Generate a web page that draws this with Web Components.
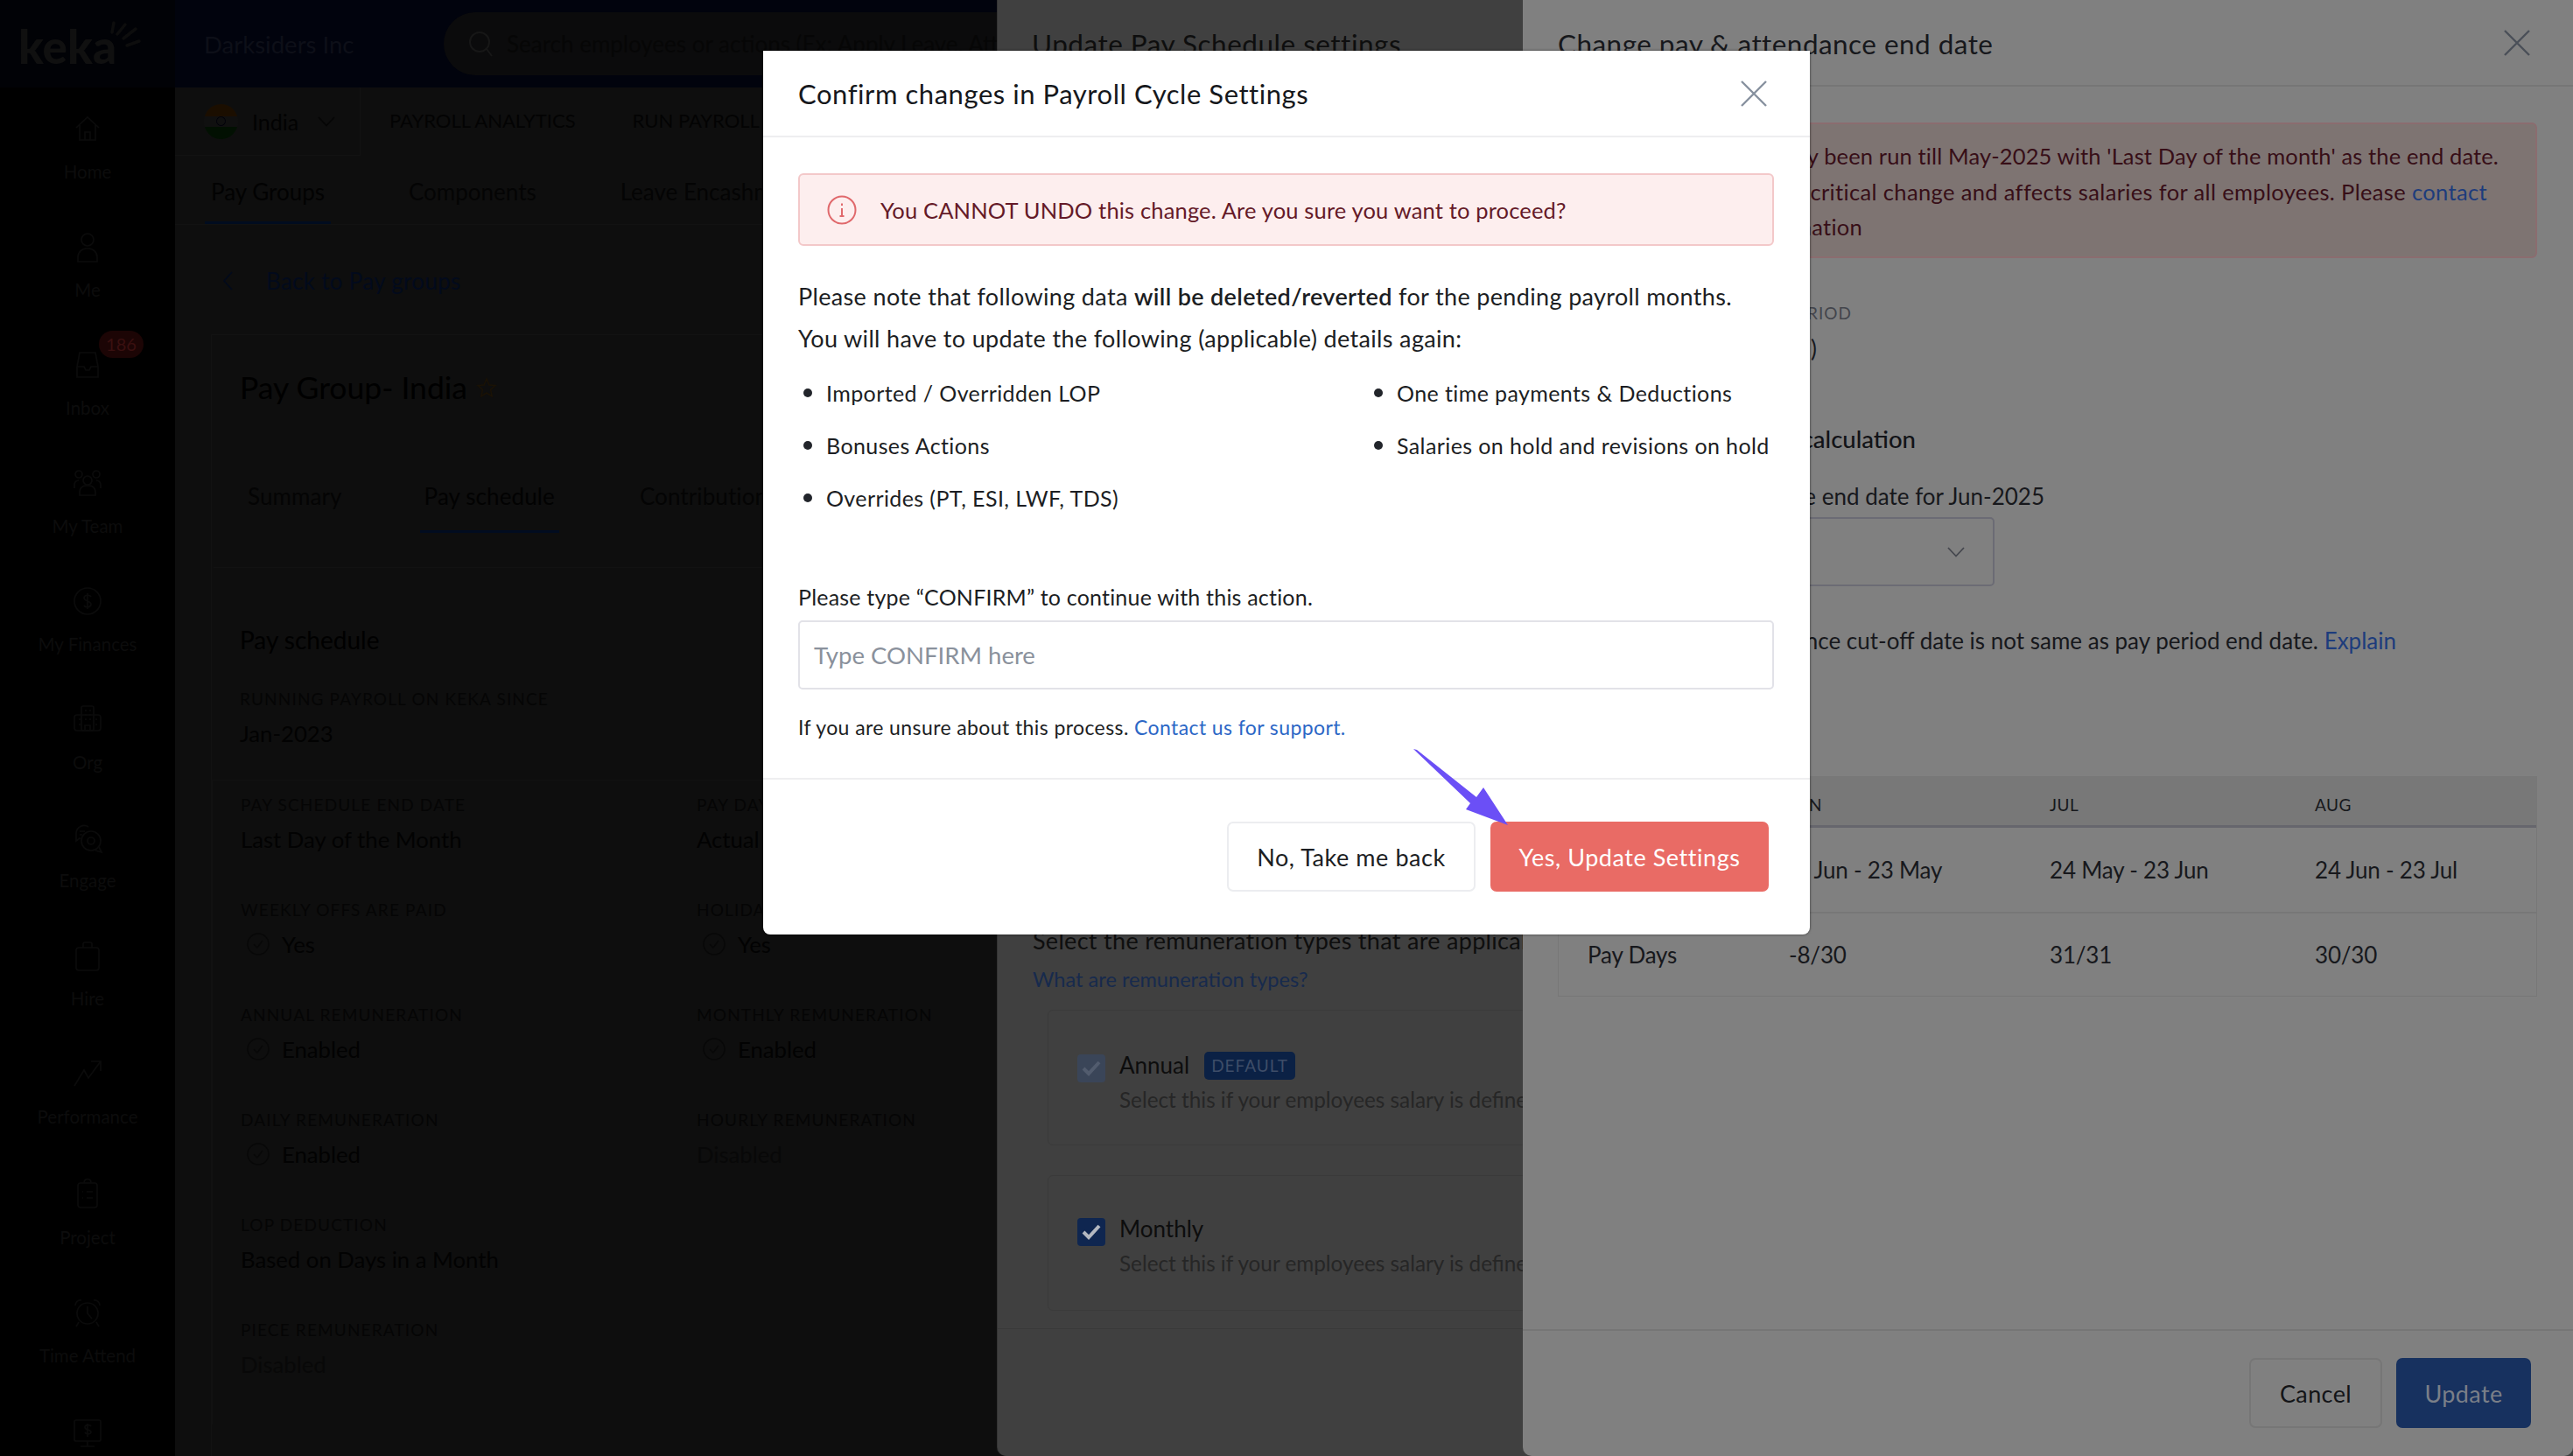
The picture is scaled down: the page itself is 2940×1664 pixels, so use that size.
<!DOCTYPE html>
<html lang="en"><head><meta charset="utf-8"><title>Confirm changes</title>
<style>html,body{margin:0;padding:0;background:#000;height:1664px;overflow:hidden}body{font-family:Lato,"Liberation Sans",sans-serif}</style></head>
<body>
<app-shell>
  <side-nav></side-nav>
  <page-view></page-view>
  <schedule-panel></schedule-panel>
  <end-date-panel></end-date-panel>
  <confirm-modal></confirm-modal>
</app-shell>
<script>
const ICONS={
home:'<path d="M3 15 16 3l13 12M7 12v17h18V12M13 29v-9h6v9"/>',
me:'<circle cx="16" cy="8" r="7"/><path d="M5 33v-5a10 10 0 0 1 10-10h2a10 10 0 0 1 10 10v5z"/>',
inbox:'<path d="M7 2h18l3 16v12H4V18zM4 18h8l2 4h4l2-4h8"/>',
team:'<circle cx="16" cy="13" r="5"/><circle cx="6" cy="6" r="4"/><circle cx="26" cy="6" r="4"/><path d="M7 30v-4a7 7 0 0 1 7-7h4a7 7 0 0 1 7 7v4zM1 22v-4a5 5 0 0 1 5-5M31 22v-4a5 5 0 0 0-5-5"/>',
finance:'<circle cx="16" cy="16" r="15"/><path d="M20 11c-1-2-7-3-8 1 0 5 8 3 8 8-1 4-7 3-8 1M16 7v18"/>',
org:'<rect x="9" y="1" width="14" height="28" rx="2"/><rect x="1" y="11" width="30" height="18" rx="3"/><path d="M13 6h2M18 6h2M13 11h2M18 11h2M6 16h2M13 16h2M18 16h2M25 16h2M6 22h2M25 22h2M13 29v-6h6v6"/>',
engage:'<path d="M17 4a9 9 0 0 0-14 7v9l4-3h1"/><path d="M7 9h6M7 13h3"/><circle cx="20" cy="20" r="11"/><path d="M29 27l3 6-7-2"/><circle cx="20" cy="20" r="4"/>',
hire:'<rect x="3" y="7" width="26" height="26" rx="3"/><path d="M11 7V3a2 2 0 0 1 2-2h6a2 2 0 0 1 2 2v4"/>',
perf:'<path d="M1 30 12 12l5 9L31 2M20 2h11v11"/>',
project:'<rect x="5" y="6" width="22" height="28" rx="3"/><path d="M12 6c0-6 8-6 8 0M10 16h1M15 16h7M10 23h1M15 23h7"/>',
time:'<circle cx="16" cy="17" r="12"/><path d="M16 9v8l5 6M2 8a6 6 0 0 1 7-6M30 8a6 6 0 0 0-7-6M6 27l-3 5M26 27l3 5"/>',
payroll:'<rect x="1" y="1" width="30" height="24" rx="2"/><path d="M20 8c-1-2-7-2-7 1 0 4 7 2 7 6-1 3-6 2-7 0M16 5v15M16 25v5M8 31h16"/>'
};
function el(name,render){customElements.define(name,class extends HTMLElement{
  connectedCallback(){if(this.shadowRoot)return;const a=n=>this.getAttribute(n)||'';this.attachShadow({mode:'open'}).innerHTML=render(a)}
})}
const closeIcon=c=>`<svg width="30" height="30" viewBox="0 0 30 30" fill="none" stroke="${c}" stroke-width="2.4"><path d="M1 1l28 28M29 1L1 29"/></svg>`;
const chev=(c,s=22)=>`<svg width="${s}" height="${s*.6}" viewBox="0 0 20 12" fill="none" stroke="${c}" stroke-width="1.8"><path d="M1 1l9 9.5L19 1"/></svg>`;

el('app-shell',()=>`<style>:host{display:grid;grid-template-columns:200px 1fr;width:2940px;height:1664px;position:relative;overflow:hidden;background:#0e0e0e}</style><slot></slot>`);

el('nav-item',a=>`<style>:host{display:flex;flex-direction:column;align-items:center;height:${a('h')||'135'}px;position:relative;color:#0c0c0c;font-size:20.5px}
svg{width:32px;height:36px;margin-top:18px;overflow:visible}span{position:absolute;top:${a('ly')||'72'}px;line-height:24px;white-space:nowrap}
b{position:absolute;left:113px;top:-4px;width:51px;height:31px;border-radius:16px;background:#1c0505;color:#3a1010;font:400 20px/31px Lato,sans-serif;text-align:center}</style>
<svg viewBox="0 0 32 34" fill="none" stroke="#0b0b0b" stroke-width="1.7">${ICONS[a('icon')]}</svg>${a('label')?`<span>${a('label')}</span>`:''}${a('badge')?`<b>${a('badge')}</b>`:''}`);

el('side-nav',()=>`<style>:host{display:block;background:#000;height:1664px;overflow:hidden}
.logo{height:100px;background:#010206;box-sizing:border-box;position:relative}
.logo span{position:absolute;left:21px;top:17px;font:900 53px/72px Lato,sans-serif;color:#101010}
.logo svg{position:absolute;left:120px;top:20px}
.items{padding-top:12px}</style>
<div class="logo"><span>keka</span><svg width="42" height="36" viewBox="0 0 42 36" fill="none" stroke="#0d0d0d" stroke-linecap="round" stroke-width="3.5"><path d="M8 17 10 6M14 19l9-11M21 24l14-11M25 32l14-5"/></svg></div>
<div class="items">
<nav-item icon="home" label="Home"></nav-item><nav-item icon="me" label="Me"></nav-item><nav-item icon="inbox" label="Inbox" badge="186"></nav-item>
<nav-item icon="team" label="My Team"></nav-item><nav-item icon="finance" label="My Finances"></nav-item><nav-item icon="org" label="Org"></nav-item>
<nav-item icon="engage" label="Engage"></nav-item><nav-item icon="hire" label="Hire"></nav-item><nav-item icon="perf" label="Performance"></nav-item>
<nav-item icon="project" label="Project" h="138" ly="75"></nav-item><nav-item icon="time" label="Time Attend" h="138"></nav-item><nav-item icon="payroll"></nav-item>
</div>`);

el('top-bar',()=>`<style>:host{display:flex;align-items:center;height:100px;background:#01030d;padding-left:33px;box-sizing:border-box;color:#0d0f18;font-size:27.5px}
.name{width:274px;white-space:nowrap}.search{display:flex;align-items:center;height:72px;width:1200px;border-radius:36px;background:#0b0b0c;padding-left:28px;box-sizing:border-box;color:#060606;font-size:26px;white-space:nowrap;gap:16px}</style>
<div class="name">Darksiders Inc</div><div class="search"><svg width="28" height="30" viewBox="0 0 28 30" fill="none" stroke="#171717" stroke-width="2"><circle cx="13" cy="13" r="11"/><path d="M21 21l6 8"/></svg>Search employees or actions (Ex: Apply Leave, Attendance)</div>`);

el('field-item',a=>`<style>:host{display:block;height:120px;box-sizing:border-box;white-space:nowrap}
.l{font-size:19px;line-height:24px;letter-spacing:1.15px;color:#050505;text-transform:uppercase;height:24px}
.v{margin-top:9px;font-size:25.7px;line-height:36px;color:${a('off')?'#080808':'#020202'};display:flex;align-items:center;gap:14px}
svg{margin-left:7px}</style><div class="l">${a('label')}</div><div class="v">${a('check')?`<svg width="26" height="26" viewBox="0 0 26 26" fill="none" stroke="#080808" stroke-width="1.5"><circle cx="13" cy="13" r="12"/><path d="M8 13l4 4 6-8"/></svg>`:''}${a('value')}</div>`);

el('page-view',()=>`<style>:host{display:block;min-width:0;height:1664px;background:#0e0e0e;overflow:hidden;color:#020202}
.bar{display:flex;height:78px;align-items:center;font-size:25px;white-space:nowrap}
.cty{display:flex;align-items:center;width:212px;height:78px;box-sizing:border-box;border-right:1px solid #121212;border-bottom:1px solid #121212;padding-left:33px}
.flag{width:39px;height:40px;border-radius:50%;background:linear-gradient(#1b0e00 0 34%,#101010 34% 66%,#021002 66%);margin-right:16px;display:flex;align-items:center;justify-content:center}
.flag i{width:9px;height:9px;border:1.5px solid #01010a;border-radius:50%}
.cty svg{margin-left:22px}.top{padding:0 0 4px 33px;display:flex;gap:65px;color:#030303;font-size:22px}
.tabs{display:flex;height:79px;box-sizing:border-box;border-bottom:1px solid #121212;padding-left:34px;font-size:26px;color:#040404}
.tabs div{padding:0 7px;line-height:82px;margin-right:82px;white-space:nowrap}.tabs .on{color:#020202;box-shadow:inset 0 -3px #010c20}
.back{display:flex;align-items:center;gap:38px;height:32px;margin:48px 0 45px 54px;font-size:26px;letter-spacing:.3px;color:#020a1c}
.card{margin-left:41px;border:1px solid #121212;border-right:0;border-bottom:0;height:1300px;box-sizing:border-box}
h1{margin:41px 0 0 32px;font:400 35.500px/38px Lato,sans-serif;display:flex;align-items:center;gap:10px;color:#000}
.sub{display:flex;height:66px;margin-top:81px;padding-left:36px;font-size:26px;letter-spacing:.1px;color:#040404}
.sub div{padding:0 5px;margin-right:84px;line-height:48px;height:66px;white-space:nowrap;box-sizing:border-box}
.sub .on{color:#020202;box-shadow:inset 0 -3px #010c20;margin-right:87px}
.rule{border-top:1px solid #121212;margin:39px 0 0 2px}
.in{padding:65px 0 0 32px}h2{margin:0;font:400 28px/34px Lato,sans-serif;color:#000}
.since{display:block;margin-top:39px;height:104px}
.grid{margin-left:-32px;padding:16px 0 0 32px;border:1px solid #121212;border-right:0;border-bottom:0;display:grid;grid-template-columns:521px 1fr;width:1000px}</style>
<top-bar></top-bar>
<div class="bar"><div class="cty"><div class="flag"><i></i></div>India${chev('#060606',20)}</div><div class="top"><span>PAYROLL ANALYTICS</span><span>RUN PAYROLL</span></div></div>
<div class="tabs"><div class="on">Pay Groups</div><div>Components</div><div>Leave Encashment</div></div>
<div class="back"><svg width="12" height="24" viewBox="0 0 12 24" fill="none" stroke="#020a1c" stroke-width="1.6"><path d="M11 2 2 12l9 10"/></svg>Back to Pay groups</div>
<div class="card"><h1>Pay Group- India<svg width="24" height="24" viewBox="0 0 24 24" fill="none" stroke="#1a1205" stroke-width="1.5"><path d="M12 2l3 7 7 .6-5.4 4.7L18.2 22 12 18l-6.2 4 1.6-7.700L2 9.600 9 9z"/></svg></h1>
<div class="sub"><div>Summary</div><div class="on">Pay schedule</div><div>Contribution</div></div>
<div class="rule"></div>
<div class="in"><h2>Pay schedule</h2>
<field-item class="since" label="Running payroll on Keka since" value="Jan-2023"></field-item>
<div class="grid"><field-item label="Pay schedule end date" value="Last Day of the Month"></field-item><field-item label="Pay day calculation" value="Actual Days"></field-item>
<field-item label="Weekly offs are paid" value="Yes" check="1"></field-item><field-item label="Holidays are paid" value="Yes" check="1"></field-item>
<field-item label="Annual remuneration" value="Enabled" check="1"></field-item><field-item label="Monthly remuneration" value="Enabled" check="1"></field-item>
<field-item label="Daily remuneration" value="Enabled" check="1"></field-item><field-item label="Hourly remuneration" value="Disabled" off="1"></field-item>
<field-item label="LOP deduction" value="Based on Days in a Month"></field-item><div></div>
<field-item label="Piece remuneration" value="Disabled" off="1"></field-item></div></div></div>`);

el('pay-type',a=>`<style>:host{display:flex;box-sizing:border-box;width:900px;height:155px;border:1px solid #3a3a3a;border-radius:6px;padding:${a('pad')||'50'}px 0 0 33px;gap:16px;white-space:nowrap}
.c{width:32px;height:32px;border-radius:4px;background:${a('muted')?'#3a4558':'#0f2650'};display:flex;align-items:center;justify-content:center;flex:none}
.t{font-size:26px;line-height:26px;color:#0d0d0d;display:flex;align-items:center;gap:17px;height:26px;margin-top:-1px}
.t b{font:400 19px/32px Lato,sans-serif;letter-spacing:1px;background:#0b2145;color:#3e4d68;border-radius:5px;padding:0 8px;margin-top:2px}
.d{margin-top:14px;font-size:24.3px;line-height:26px;color:#262626}</style>
<div class="c"><svg width="22" height="18" viewBox="0 0 22 18" fill="none" stroke="${a('muted')?'#525c6e':'#b4b8c0'}" stroke-width="4"><path d="M2 9l6 6L20 2"/></svg></div>
<div><div class="t">${a('name')}${a('tag')?`<b>${a('tag')}</b>`:''}</div><div class="d">${a('desc')}</div></div>`);

el('schedule-panel',()=>`<style>:host{position:absolute;left:1140px;right:0;top:0;bottom:0;background:#404040;border-radius:0 0 0 10px;box-shadow:-1px 0 0 #333;color:#0e0e0e;overflow:hidden}
.h{height:98px;border-bottom:1px solid #393939;box-sizing:border-box;padding-left:39px;font-size:31.5px;letter-spacing:.5px;line-height:100px}
.b{padding:960px 0 0 40px;white-space:nowrap}.s{font-size:27px;line-height:34px;letter-spacing:.3px}.w{margin-top:10px;font-size:23.6px;line-height:34px;color:#172a4d}
.types{margin:18px 0 0 17px;display:flex;flex-direction:column;gap:34px}
.f{margin-top:20px;border-top:1px solid #393939}</style>
<div class="h">Update Pay Schedule settings</div>
<div class="b"><div class="s">Select the remuneration types that are applicable for your organization</div><div class="w">What are remuneration types?</div>
<div class="types"><pay-type muted="1" name="Annual" tag="DEFAULT" desc="Select this if your employees salary is defined as annual CTC"></pay-type>
<pay-type pad="48" name="Monthly" desc="Select this if your employees salary is defined as monthly CTC"></pay-type></div></div><div class="f"></div>`);

el('end-date-panel',()=>`<style>:host{position:absolute;left:1740px;right:0;top:0;bottom:0;background:#808080;border-radius:0 0 10px 10px;color:#17181c;font-size:26px;white-space:nowrap}
.h{height:99px;border-bottom:2px solid #767676;box-sizing:border-box;padding-left:40px;font-size:31.5px;letter-spacing:.45px;line-height:100px;display:flex;justify-content:space-between}
.h svg{margin:34px 49px 0 0}.b{padding:0 41px 0 40px}
.r{text-align:right}
.alert{margin-top:41px;height:155px;box-sizing:border-box;border:2px solid #8b6c6f;border-radius:6px;background:#7e7472;padding-top:16px;color:#370e17;line-height:40.5px;font-size:25.5px}
.lab{margin-top:51px;width:336px;font-size:19px;line-height:24px;letter-spacing:1px;color:#43454c}
.val{margin-top:12px;width:296px;line-height:32px}
.sec{margin-top:71px;width:409px;font-size:27.5px;line-height:34px;font-weight:500;color:#121317}
.q{margin-top:31px;width:556px;line-height:34px}
.sel{margin-top:7px;width:499px;height:79px;box-sizing:border-box;border:2px solid #6b6b74;border-radius:5px;display:flex;align-items:center;justify-content:flex-end;padding-right:32px}
.note{margin-top:46px;width:958px;line-height:32px}a{color:#1d3c7c}
.t{margin-top:139px;border:1px solid #777;border-top:0;letter-spacing:-.2px}
.g{display:grid;grid-template-columns:230px 298px 303px 1fr;padding-left:33px;align-items:center;box-sizing:border-box}
.th{height:59px;background:#787878;border-bottom:3px solid #66666d;font-size:19px;letter-spacing:.5px;padding-top:8px}
.tr{height:98px;border-bottom:2px solid #777;line-height:40px}.tr:last-child{border-bottom:0;height:94px}
.foot{position:absolute;left:0;right:0;bottom:0;height:145px;border-top:2px solid #767676;box-sizing:border-box;display:flex;justify-content:flex-end;gap:16px;padding:31px 48px 0 0}
.btn{height:80px;border-radius:7px;box-sizing:border-box;display:flex;align-items:center;justify-content:center;font-size:27px;letter-spacing:.4px}
.c{width:152px;border:2px solid #767676;color:#131417}.u{width:154px;background:#17315f;color:#7a7f88}</style>
<div class="h"><span>Change pay &amp; attendance end date</span>${closeIcon('#4a4f58')}</div>
<div class="b"><div class="alert"><div class="r" style="width:1073px;letter-spacing:.13px">Payroll has already been run till May-2025 with 'Last Day of the month' as the end date.</div><div class="r" style="width:1060px;letter-spacing:.35px">Changing this is a critical change and affects salaries for all employees. Please <a>contact</a></div><div class="r" style="width:346px;letter-spacing:.25px">support for confirmation</div></div>
<div class="lab r">CURRENT PAY PERIOD</div><div class="val r">Last Day of the Month (1)</div>
<div class="sec r">Pay &amp; attendance calculation</div>
<div class="q r">Select attendance end date for Jun-2025</div>
<div class="sel">${chev('#45474e',20)}</div>
<div class="note r">Attendance cut-off date is not same as pay period end date. <a>Explain</a></div>
<div class="t"><div class="g th"><span></span><span>JUN</span><span>JUL</span><span>AUG</span></div>
<div class="g tr"><span></span><span style="margin-left:-7px">24 Jun - 23 May</span><span>24 May - 23 Jun</span><span>24 Jun - 23 Jul</span></div>
<div class="g tr"><span>Pay Days</span><span>-8/30</span><span>31/31</span><span>30/30</span></div></div></div>
<div class="foot"><div class="btn c">Cancel</div><div class="btn u">Update</div></div>`);

el('confirm-modal',()=>`<style>:host{position:absolute;left:872px;top:58px;width:1196px;height:1010px;background:#fff;border-radius:0 0 8px 8px;box-shadow:0 0 3px rgba(0,0,0,.6);color:#1c1e23;font-size:27px;white-space:nowrap;display:block}
.h{height:99px;box-sizing:border-box;border-bottom:2px solid #eeeef0;padding-left:40px;display:flex;justify-content:space-between;font-size:31px;letter-spacing:.55px;line-height:98px;color:#16181c}
.h svg{margin:34px 49px 0 0}.b{padding:0 41px 0 40px}
.a{margin-top:41px;height:83px;box-sizing:border-box;border:2px solid #f3c8c9;border-radius:6px;background:#fdeeee;color:#651a28;display:flex;align-items:center;gap:27px;padding-left:31px;font-size:25.5px;letter-spacing:.16px}
.p{margin-top:34px;line-height:48px;letter-spacing:.35px}.p b{font-weight:600}
.l{margin-top:8px;display:grid;grid-template-columns:652px 1fr;grid-auto-rows:60px;font-size:25px;letter-spacing:.4px}
.l div{display:flex;align-items:center;gap:16px;padding-left:6px}.l i{width:10px;height:10px;border-radius:50%;background:#22252b;flex:none}
.k{margin-top:67px;line-height:32px;font-size:25px;letter-spacing:.2px}
.inp{margin-top:11px;height:79px;box-sizing:border-box;border:2px solid #e2e2e8;border-radius:5px;padding-left:16px;line-height:75px;color:#8a919c;font-size:27.5px}
.u{margin-top:27px;line-height:32px;font-size:23px;letter-spacing:.4px}a{color:#2c67c6}
.f{margin-top:42px;border-top:2px solid #eeeef0;display:flex;justify-content:flex-end;gap:17px;padding:48px 47px 48px 0}
button{font:inherit;letter-spacing:.55px;height:80px;border-radius:7px;box-sizing:border-box;padding:0}
.n{width:284px;background:#fff;border:2px solid #ecedf0;color:#1c1e23}.y{width:318px;background:#e96b65;border:0;color:#fff}
svg.ar{position:absolute;left:740px;top:796px;overflow:visible}</style>
<div class="h"><span>Confirm changes in Payroll Cycle Settings</span>${closeIcon('#87919f')}</div>
<div class="b"><div class="a"><svg width="34" height="34" viewBox="0 0 34 34" fill="none" stroke="#e0696c" stroke-width="2"><circle cx="17" cy="17" r="15.5"/><path d="M17 15v9M14.500 24h5M17 9.500v2.500"/></svg>You CANNOT UNDO this change. Are you sure you want to proceed?</div>
<div class="p">Please note that following data <b>will be deleted/reverted</b> for the pending payroll months.<br>You will have to update the following (applicable) details again:</div>
<div class="l"><div><i></i>Imported / Overridden LOP</div><div><i></i>One time payments &amp; Deductions</div><div><i></i>Bonuses Actions</div><div><i></i>Salaries on hold and revisions on hold</div><div><i></i>Overrides (PT, ESI, LWF, TDS)</div></div>
<div class="k">Please type “CONFIRM” to continue with this action.</div>
<div class="inp">Type CONFIRM here</div>
<div class="u">If you are unsure about this process. <a>Contact us for support.</a></div></div>
<div class="f"><button class="n">No, Take me back</button><button class="y">Yes, Update Settings</button></div>
<svg class="ar" width="120" height="95" viewBox="1612 854 120 95"><polygon fill="#6b4ff6" points="1615,856 1619,857 1687,911 1695,900 1723,943 1675,925 1680,918"/></svg>`);
</script>
</body></html>
